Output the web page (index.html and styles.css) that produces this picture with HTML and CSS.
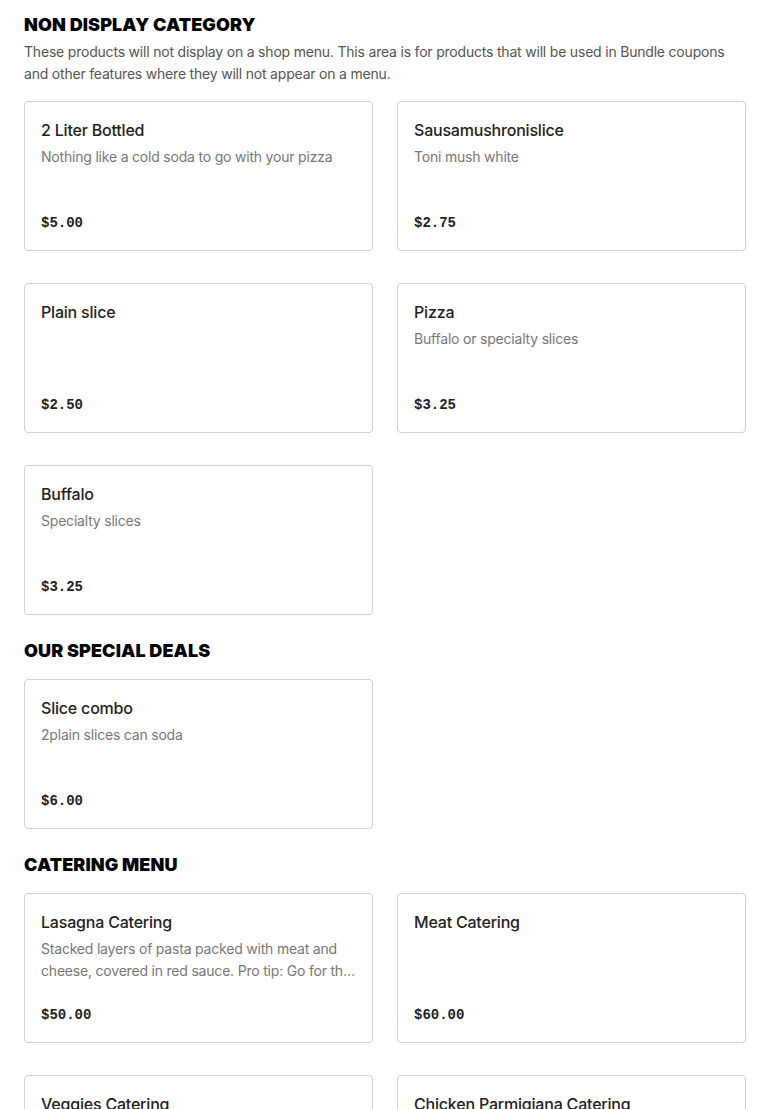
FILE: index.html
```html
<!DOCTYPE html>
<html lang="en">
<head>
    <meta charset="UTF-8">
    <meta name="viewport" content="width=device-width, initial-scale=1.0">
    <title>Menu</title>
    <link rel="stylesheet" href="styles.css">
</head>
<body>
    <main class="menu">
        <section class="category">
            <h2 class="category-title">Non Display Category</h2>
            <p class="category-desc">These products will not display on a shop menu. This area is for products that will be used in Bundle coupons and other features where they will not appear on a menu.</p>
            <div class="item-grid">
                <div class="item">
                    <div class="item-name">2 Liter Bottled</div>
                    <div class="item-desc">Nothing like a cold soda to go with your pizza</div>
                    <div class="item-price">$5.00</div>
                </div>
                <div class="item">
                    <div class="item-name">Sausamushronislice</div>
                    <div class="item-desc">Toni mush white</div>
                    <div class="item-price">$2.75</div>
                </div>
                <div class="item">
                    <div class="item-name">Plain slice</div>
                    <div class="item-desc"></div>
                    <div class="item-price">$2.50</div>
                </div>
                <div class="item">
                    <div class="item-name">Pizza</div>
                    <div class="item-desc">Buffalo or specialty slices</div>
                    <div class="item-price">$3.25</div>
                </div>
                <div class="item">
                    <div class="item-name">Buffalo</div>
                    <div class="item-desc">Specialty slices</div>
                    <div class="item-price">$3.25</div>
                </div>
            </div>
        </section>

        <section class="category">
            <h2 class="category-title">Our Special Deals</h2>
            <div class="item-grid">
                <div class="item">
                    <div class="item-name">Slice combo</div>
                    <div class="item-desc">2plain slices can soda</div>
                    <div class="item-price">$6.00</div>
                </div>
            </div>
        </section>

        <section class="category">
            <h2 class="category-title">Catering Menu</h2>
            <div class="item-grid">
                <div class="item">
                    <div class="item-name">Lasagna Catering</div>
                    <div class="item-desc">Stacked layers of pasta packed with meat and cheese, covered in red sauce. Pro tip: Go for the meat lasagna, you won't regret it.</div>
                    <div class="item-price">$50.00</div>
                </div>
                <div class="item">
                    <div class="item-name">Meat Catering</div>
                    <div class="item-desc"></div>
                    <div class="item-price">$60.00</div>
                </div>
                <div class="item">
                    <div class="item-name">Veggies Catering</div>
                    <div class="item-desc"></div>
                    <div class="item-price">$55.00</div>
                </div>
                <div class="item">
                    <div class="item-name">Chicken Parmigiana Catering</div>
                    <div class="item-desc"></div>
                    <div class="item-price">$65.00</div>
                </div>
            </div>
        </section>
    </main>
</body>
</html>
```

FILE: styles.css
```css
body {
    margin: 0;
    padding: 0;
    background: #fff;
    font-family: 'Inter', 'Liberation Sans', sans-serif;
    color: #222;
}
.menu {
    padding: 13px 24px 24px;
    display: flex;
    flex-direction: column;
    gap: 24px;
}
.category-title {
    margin: 0;
    font-size: 18px;
    line-height: 24px;
    font-weight: 900;
    text-transform: uppercase;
    color: #000;
    letter-spacing: 0.1px;
}
.category-desc {
    margin: 4px 0 0;
    font-size: 14px;
    line-height: 22px;
    color: #555;
    letter-spacing: -0.2px;
}
.item-grid {
    margin-top: 16px;
    display: grid;
    grid-template-columns: 1fr 1fr;
    column-gap: 24px;
    row-gap: 32px;
}
.item {
    box-sizing: border-box;
    height: 150px;
    border: 1px solid #d2d2d2;
    border-radius: 4px;
    padding: 16px;
    display: flex;
    flex-direction: column;
}
.item-name {
    font-size: 16px;
    line-height: 24px;
    font-weight: 500;
    color: #222;
    letter-spacing: -0.2px;
}
.item-desc {
    margin-top: 4px;
    font-size: 14px;
    line-height: 22px;
    color: #777;
    letter-spacing: -0.2px;
    display: -webkit-box;
    -webkit-line-clamp: 2;
    -webkit-box-orient: vertical;
    overflow: hidden;
}
.item-price {
    margin-top: auto;
    font-family: 'Liberation Mono', 'DejaVu Sans Mono', monospace;
    font-size: 14px;
    line-height: 22px;
    font-weight: bold;
    color: #222;
}
```
